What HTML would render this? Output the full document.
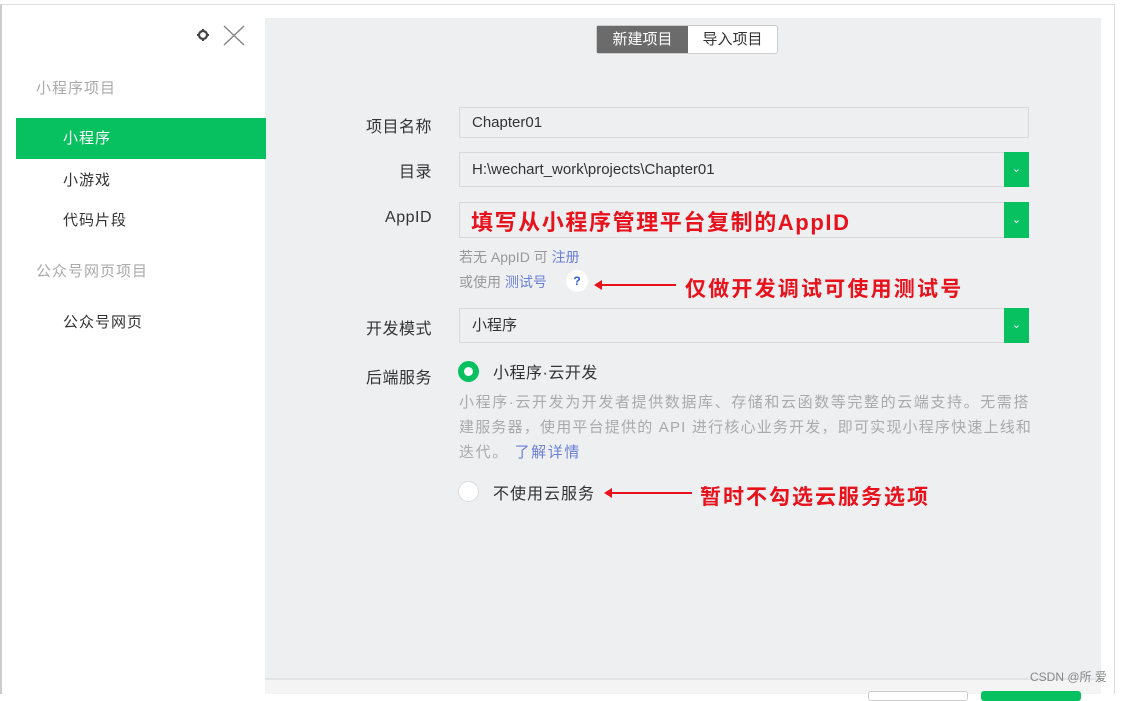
<!DOCTYPE html>
<html><head><meta charset="utf-8"><style>
*{margin:0;padding:0;box-sizing:border-box}
body{width:1124px;height:694px;background:#fff;font-family:"Liberation Sans","Noto Sans CJK SC",sans-serif;position:relative;overflow:hidden;color:#333}
.a{position:absolute}
.lbl{position:absolute;width:130px;text-align:right;left:302px;font-size:16px;letter-spacing:0.5px;color:#333}
.inp{position:absolute;left:459px;width:570px;background:#eeeff1;border:1px solid #d8d8d8;font-size:15px;color:#333;padding-left:12px}
.dd{position:absolute;right:-1px;top:-1px;bottom:-1px;width:25px;background:#07c160;color:#fff;font-size:11px;text-align:center}
.red{color:#e8121c;font-weight:bold;font-size:21px;letter-spacing:2px;position:absolute;white-space:nowrap}
.arrow{position:absolute;height:2px;background:#e8121c}
.arrow:before{content:"";position:absolute;left:-6px;top:-4px;border-right:8px solid #e8121c;border-top:5px solid transparent;border-bottom:5px solid transparent}
</style></head><body>
<div class="a" style="left:0;top:4px;width:1115px;height:690px;border-top:1px solid #ddd;border-left:2px solid #ccc;border-right:1px solid #ddd"></div>
<div class="a" style="left:265px;top:18px;width:836px;height:661px;background:#eeeff1"></div>
<div class="a" style="left:265px;top:678px;width:836px;height:2px;background:#e2e3e6"></div>
<div class="a" style="left:265px;top:680px;width:836px;height:14px;background:#f4f4f4"></div>
<div class="a" style="left:868px;top:691px;width:100px;height:10px;border:1px solid #ccc;border-radius:3px;background:#fff"></div>
<div class="a" style="left:981px;top:691px;width:100px;height:10px;border-radius:3px;background:#07c160"></div>
<div class="a" style="left:1030px;top:668px;font-size:12px;color:#888">CSDN @所 爱</div>
<svg class="a" style="left:196px;top:28px" width="14" height="14" viewBox="0 0 14 14"><circle cx="7" cy="7" r="4" fill="none" stroke="#444" stroke-width="2.2"/><g stroke="#444" stroke-width="2"><line x1="7" y1="1" x2="7" y2="3"/><line x1="7" y1="11" x2="7" y2="13"/><line x1="1" y1="7" x2="3" y2="7"/><line x1="11" y1="7" x2="13" y2="7"/></g></svg>
<svg class="a" style="left:223px;top:25px" width="22" height="21"><path d="M1 1L21 20M21 1L1 20" stroke="#888" stroke-width="1.5"/></svg>
<div class="a" style="left:36px;top:77px;font-size:15px;letter-spacing:1px;color:#aaa">小程序项目</div>
<div class="a" style="left:16px;top:118px;width:250px;height:41px;background:#07c160;color:#fff;font-size:15px;letter-spacing:1px;padding:9px 0 0 47px">小程序</div>
<div class="a" style="left:63px;top:169px;font-size:15px;letter-spacing:1px">小游戏</div>
<div class="a" style="left:63px;top:209px;font-size:15px;letter-spacing:1px">代码片段</div>
<div class="a" style="left:36px;top:260px;font-size:15px;letter-spacing:1px;color:#aaa">公众号网页项目</div>
<div class="a" style="left:63px;top:311px;font-size:15px;letter-spacing:1px">公众号网页</div>
<div class="a" style="left:596px;top:25px;width:182px;height:29px;border:1px solid #ccc;border-radius:3px;background:#fff;font-size:15px">
<div class="a" style="left:0;top:0;width:91px;height:27px;background:#6b6b6b;color:#fff;text-align:center;line-height:27px">新建项目</div>
<div class="a" style="left:91px;top:0;width:89px;height:27px;text-align:center;line-height:27px;color:#333">导入项目</div></div>
<div class="lbl" style="top:113px">项目名称</div>
<div class="inp" style="top:107px;height:31px;line-height:29px">Chapter01</div>
<div class="lbl" style="top:158px">目录</div>
<div class="inp" style="top:152px;height:35px;line-height:33px">H:\wechart_work\projects\Chapter01<div class="dd" style="line-height:35px">⌄</div></div>
<div class="lbl" style="top:209px">AppID</div>
<div class="inp" style="top:202px;height:36px"><div class="dd" style="line-height:36px">⌄</div></div>
<div class="red" style="left:471px;top:205px;font-size:22px;letter-spacing:1.6px">填写从小程序管理平台复制的AppID</div>
<div class="a" style="left:459px;top:247px;font-size:14px;color:#999">若无 AppID 可 <span style="color:#6a7fd8">注册</span></div>
<div class="a" style="left:459px;top:272px;font-size:14px;color:#999">或使用 <span style="color:#6a7fd8">测试号</span></div>
<div class="a" style="left:566px;top:270px;width:22px;height:22px;border-radius:50%;background:#fff;color:#2b5fd9;font-size:12px;font-weight:bold;text-align:center;line-height:22px">?</div>
<div class="arrow" style="left:600px;top:284px;width:76px"></div>
<div class="red" style="left:685px;top:273px;letter-spacing:2.2px">仅做开发调试可使用测试号</div>
<div class="lbl" style="top:315px">开发模式</div>
<div class="inp" style="top:308px;height:35px;line-height:33px">小程序<div class="dd" style="line-height:35px">⌄</div></div>
<div class="lbl" style="top:364px">后端服务</div>
<div class="a" style="left:458px;top:361px;width:21px;height:21px;border-radius:50%;background:#07c160"><div class="a" style="left:6px;top:6px;width:9px;height:9px;border-radius:50%;background:#fff"></div></div>
<div class="a" style="left:493px;top:359px;font-size:16px;letter-spacing:0.5px">小程序·云开发</div>
<div class="a" style="left:459px;top:390px;white-space:nowrap;font-size:15px;letter-spacing:1.6px;line-height:25px;color:#aaa">小程序·云开发为开发者提供数据库、存储和云函数等完整的云端支持。无需搭<br><span style="letter-spacing:1.2px">建服务器，使用平台提供的 API 进行核心业务开发，即可实现小程序快速上线和</span><br>迭代。 <span style="color:#6a7fd8">了解详情</span></div>
<div class="a" style="left:458px;top:481px;width:21px;height:21px;border-radius:50%;background:#fff;border:1px solid #ddd"></div>
<div class="a" style="left:493px;top:480px;font-size:16px;letter-spacing:1px">不使用云服务</div>
<div class="arrow" style="left:610px;top:492px;width:82px"></div>
<div class="red" style="left:700px;top:481px">暂时不勾选云服务选项</div>
</body></html>
